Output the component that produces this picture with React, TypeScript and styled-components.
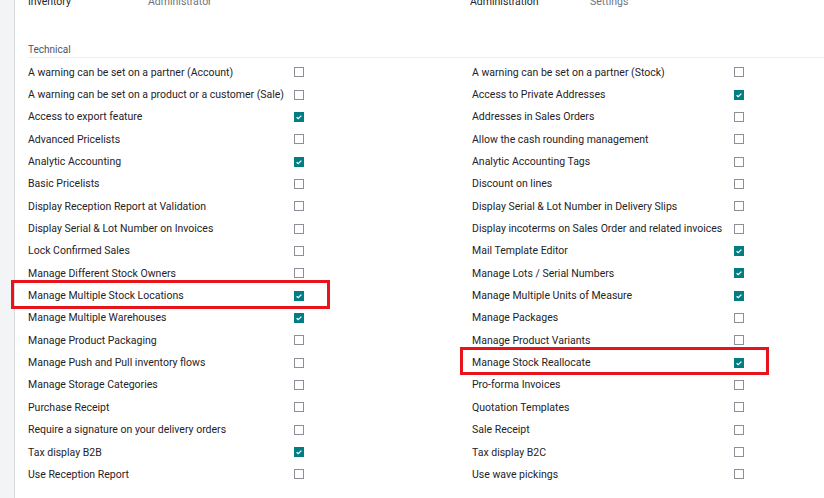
import React from 'react';
import styled, { createGlobalStyle } from 'styled-components';

const GlobalStyle = createGlobalStyle`
	html, body {
		margin: 0;
		padding: 0;
		background: #fff;
		overflow: hidden;
	}
	body {
		font-family: Roboto, 'Noto Sans', 'Liberation Sans', sans-serif;
		font-size: 10.5px;
		color: #1f2328;
	}
`;

const Shell = styled.div`
	display: flex;
	width: 824px;
	height: 498px;
	overflow: hidden;
`;

const SideStrip = styled.div`
	width: 14px;
	flex-shrink: 0;
	background: #f3f4f6;
	border-right: 1px solid #d9dbe0;
`;

const Content = styled.div`
	flex: 1;
	padding-left: 13px;
`;

// the page is scrolled, so the user row is only half visible
const HeaderRow = styled.div`
	display: grid;
	grid-template-columns: 442px 1fr;
	margin-top: -8px;
	height: 20px;
	line-height: 20px;
`;

const HeaderPair = styled.div`
	display: flex;
`;

const HeaderKey = styled.span`
	width: 120px;
	color: #1f2328;
`;

const HeaderValue = styled.span`
	color: #6c757d;
`;

const SectionTitle = styled.div`
	margin-top: 30px;
	height: 15px;
	line-height: 16px;
	font-size: 10px;
	color: #4a5562;
	border-bottom: 1px solid #eceef1;
`;

const Columns = styled.div`
	display: grid;
	grid-template-columns: 444px 1fr;
	margin-top: 3px;
`;

const Column = styled.div`
	display: flex;
	flex-direction: column;
`;

const Row = styled.div`
	position: relative;
	display: flex;
	align-items: center;
	height: 22.35px;
`;

const Label = styled.span<{ $width: number }>`
	width: ${(p) => p.$width}px;
	flex-shrink: 0;
	white-space: nowrap;
`;

const Box = styled.span<{ $checked: boolean }>`
	width: 10px;
	height: 10px;
	box-sizing: border-box;
	display: flex;
	align-items: center;
	justify-content: center;
	border: ${(p) => (p.$checked ? 'none' : '1px solid #8d8f98')};
	background: ${(p) => (p.$checked ? '#017e84' : '#fff')};
`;

const Highlight = styled.div<{ $left: number; $width: number; $top: number; $height: number }>`
	position: absolute;
	left: ${(p) => p.$left}px;
	top: ${(p) => p.$top}px;
	width: ${(p) => p.$width}px;
	height: ${(p) => p.$height}px;
	box-sizing: border-box;
	border: 3px solid #e8141b;
	pointer-events: none;
`;

interface Item {
	label: string;
	checked?: boolean;
	mark?: { left: number; width: number; top: number; height: number };
}

const left: Item[] = [
	{ label: 'A warning can be set on a partner (Account)' },
	{ label: 'A warning can be set on a product or a customer (Sale)' },
	{ label: 'Access to export feature', checked: true },
	{ label: 'Advanced Pricelists' },
	{ label: 'Analytic Accounting', checked: true },
	{ label: 'Basic Pricelists' },
	{ label: 'Display Reception Report at Validation' },
	{ label: 'Display Serial & Lot Number on Invoices' },
	{ label: 'Lock Confirmed Sales' },
	{ label: 'Manage Different Stock Owners' },
	{ label: 'Manage Multiple Stock Locations', checked: true, mark: { left: -17, width: 319, top: -4.5, height: 29.5 } },
	{ label: 'Manage Multiple Warehouses', checked: true },
	{ label: 'Manage Product Packaging' },
	{ label: 'Manage Push and Pull inventory flows' },
	{ label: 'Manage Storage Categories' },
	{ label: 'Purchase Receipt' },
	{ label: 'Require a signature on your delivery orders' },
	{ label: 'Tax display B2B', checked: true },
	{ label: 'Use Reception Report' },
];

const right: Item[] = [
	{ label: 'A warning can be set on a partner (Stock)' },
	{ label: 'Access to Private Addresses', checked: true },
	{ label: 'Addresses in Sales Orders' },
	{ label: 'Allow the cash rounding management' },
	{ label: 'Analytic Accounting Tags' },
	{ label: 'Discount on lines' },
	{ label: 'Display Serial & Lot Number in Delivery Slips' },
	{ label: 'Display incoterms on Sales Order and related invoices' },
	{ label: 'Mail Template Editor', checked: true },
	{ label: 'Manage Lots / Serial Numbers', checked: true },
	{ label: 'Manage Multiple Units of Measure', checked: true },
	{ label: 'Manage Packages' },
	{ label: 'Manage Product Variants' },
	{ label: 'Manage Stock Reallocate', checked: true, mark: { left: -12, width: 309, top: -4.3, height: 28 } },
	{ label: 'Pro-forma Invoices' },
	{ label: 'Quotation Templates' },
	{ label: 'Sale Receipt' },
	{ label: 'Tax display B2C' },
	{ label: 'Use wave pickings' },
];

const Check = () => (
	<svg width="8" height="8" viewBox="0 0 8 8">
		<path d="M1.6 4.3 L3.2 5.7 L6.4 2.6" fill="none" stroke="#fff" strokeWidth="1.3" />
	</svg>
);

const SettingColumn = ({ items, labelWidth }: { items: Item[]; labelWidth: number }) => (
	<Column>
		{items.map((it) => (
			<Row key={it.label}>
				<Label $width={labelWidth}>{it.label}</Label>
				<Box $checked={!!it.checked}>{it.checked && <Check />}</Box>
				{it.mark && (
					<Highlight $left={it.mark.left} $width={it.mark.width} $top={it.mark.top} $height={it.mark.height} />
				)}
			</Row>
		))}
	</Column>
);

export default function App() {
	return (
		<>
			<GlobalStyle />
			<Shell>
				<SideStrip />
				<Content>
					<HeaderRow>
						<HeaderPair>
							<HeaderKey>Inventory</HeaderKey>
							<HeaderValue>Administrator</HeaderValue>
						</HeaderPair>
						<HeaderPair>
							<HeaderKey>Administration</HeaderKey>
							<HeaderValue>Settings</HeaderValue>
						</HeaderPair>
					</HeaderRow>
					<SectionTitle>Technical</SectionTitle>
					<Columns>
						<SettingColumn items={left} labelWidth={266} />
						<SettingColumn items={right} labelWidth={262} />
					</Columns>
				</Content>
			</Shell>
		</>
	);
}
